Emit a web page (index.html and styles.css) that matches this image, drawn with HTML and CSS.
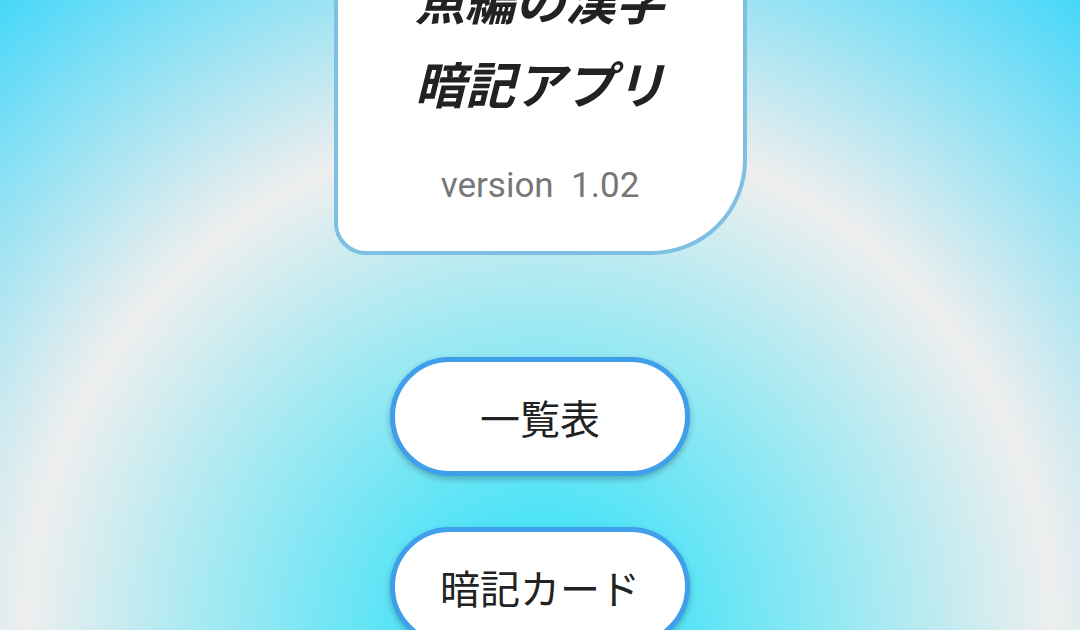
FILE: index.html
```html
<!DOCTYPE html>
<html lang="ja">
<head>
    <meta charset="UTF-8">
    <meta name="viewport" content="width=device-width, initial-scale=1.0">
    <title>魚編の漢字 暗記アプリ</title>
    <link rel="stylesheet" href="styles.css">
</head>
<body>
    <div class="screen">
        <!-- Title card -->
        <div class="title-card">
            <h1 class="title">
                <span>魚編の漢字</span>
                <span>暗記アプリ</span>
            </h1>
            <p class="version">version&nbsp; 1.02</p>
        </div>

        <!-- Menu -->
        <div class="menu">
            <button class="menu-button">一覧表</button>
            <button class="menu-button">暗記カード</button>
        </div>
    </div>
</body>
</html>
```

FILE: styles.css
```css
html, body {
    height: 100%;
}

body {
    margin: 0;
    overflow: hidden;
    font-family: "Noto Sans CJK JP", "Noto Sans", sans-serif;
    background: radial-gradient(circle at 540px 640px,
        #40e3f9 0px,
        #4ae3f7 110px,
        #eeeeee 515px,
        #44d7f9 840px);
}

.screen {
    display: flex;
    flex-direction: column;
    align-items: center;
}

.title-card {
    box-sizing: border-box;
    width: 413px;
    margin-top: -88px;
    padding: 40px 0 44px;
    background-color: #ffffff;
    border: 4px solid #7fc0e2;
    border-radius: 95px 32px 95px 32px;
    text-align: center;
}

.title {
    margin: 0;
    font-size: 50px;
    font-weight: 700;
    font-style: italic;
    line-height: 84px;
    color: #222222;
}

.title span {
    display: block;
}

.version {
    margin: 41px 0 0;
    font-family: Roboto, "Noto Sans", sans-serif;
    font-size: 35px;
    line-height: 42px;
    color: #777777;
}

.menu {
    display: flex;
    flex-direction: column;
    align-items: center;
    gap: 51px;
    margin-top: 102px;
}

.menu-button {
    box-sizing: border-box;
    width: 300px;
    height: 119px;
    padding: 0;
    font-family: "Noto Sans CJK JP", "Noto Sans", sans-serif;
    font-size: 40px;
    color: #222222;
    background-color: #ffffff;
    border: 5px solid #3f9fea;
    border-radius: 60px;
    box-shadow: 0 3px 6px rgba(0, 0, 0, 0.25);
    cursor: pointer;
}
```
